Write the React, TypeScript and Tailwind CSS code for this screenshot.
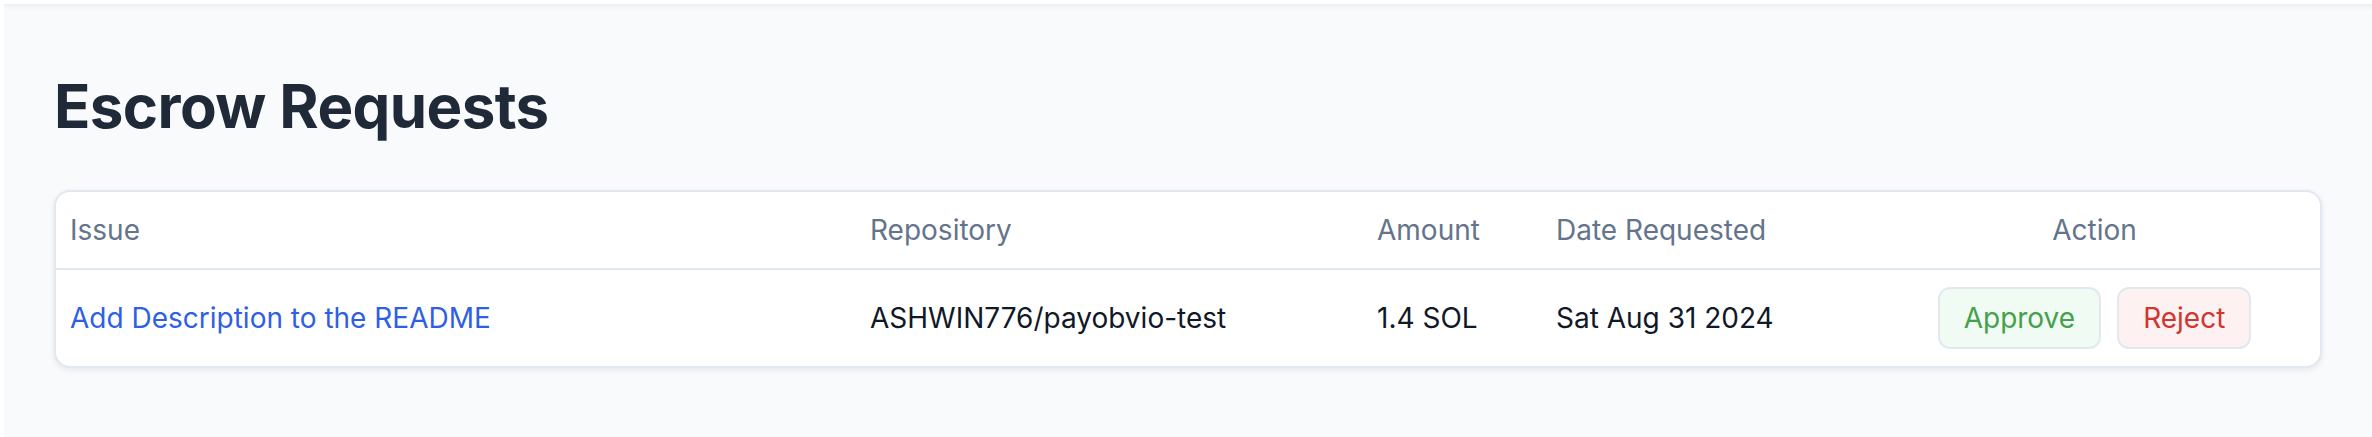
const columns = ["Issue", "Repository", "Amount", "Date Requested"]

const requests = [
  {
    issue: "Add Description to the README",
    repo: "ASHWIN776/payobvio-test",
    amount: "1.4 SOL",
    date: "Sat Aug 31 2024",
  },
]

const grid = "grid grid-cols-[800px_507px_179px_327px_1fr] items-center"

export default function App() {
  return (
    <div className="min-h-screen bg-white pl-[4px] pt-[4px] font-['Inter',sans-serif]">
      <div className="min-h-[433px] bg-[#f8fafc] px-[50px] pt-[66px] pb-10 shadow-[inset_0_5px_5px_-3px_rgba(15,23,42,0.06)]">
        <h1 className="text-[60px] font-bold leading-[72px] tracking-[-0.01em] text-[#1f2937]">Escrow Requests</h1>

        <div className="mt-[48px] overflow-hidden rounded-[16px] border-2 border-[#e2e8f0] bg-white shadow-[0_2px_6px_rgba(15,23,42,0.08)]">
          <div className={`${grid} h-[78px] border-b-2 border-[#e2e8f0] text-[28px] text-[#64748b]`}>
            {columns.map((c) => (
              <div key={c} className="px-[14px]">
                {c}
              </div>
            ))}
            <div className="px-[14px] text-center">Action</div>
          </div>

          {requests.map((r) => (
            <div key={r.issue} className={`${grid} h-[96px] text-[28px] text-[#111827]`}>
              <div className="px-[14px]">
                <a href="#" className="text-[#2f5fe3]">
                  {r.issue}
                </a>
              </div>
              <div className="px-[14px]">{r.repo}</div>
              <div className="px-[14px]">{r.amount}</div>
              <div className="px-[14px]">{r.date}</div>
              <div className="flex justify-center gap-4 px-[14px]">
                <button className="h-[62px] rounded-[12px] border-2 border-[#e2e8f0] bg-[#f0fbf3] px-6 text-[28px] text-[#46a04b]">
                  Approve
                </button>
                <button className="h-[62px] rounded-[12px] border-2 border-[#e2e8f0] bg-[#fdf1f1] px-6 text-[28px] text-[#d03530]">
                  Reject
                </button>
              </div>
            </div>
          ))}
        </div>
      </div>
    </div>
  )
}
